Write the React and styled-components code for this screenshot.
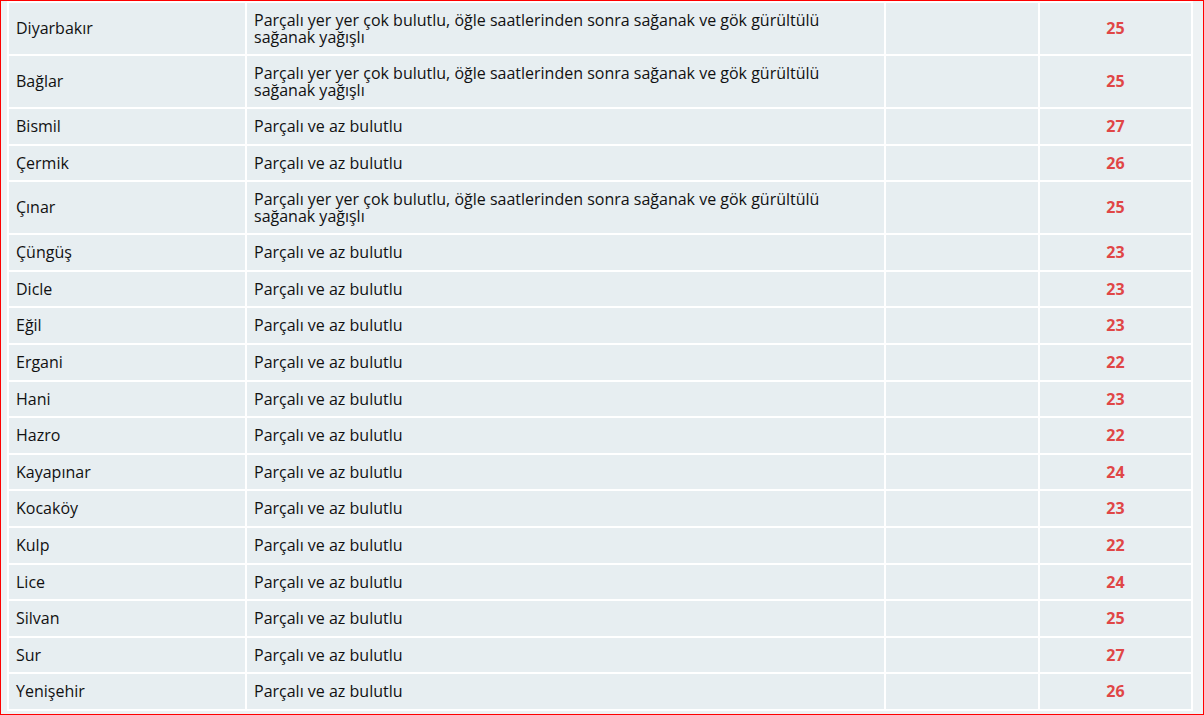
import React from "react";
import styled, { createGlobalStyle } from "styled-components";

const G = createGlobalStyle`
  html, body { margin: 0; padding: 0; }
  body { font-family: "Open Sans", sans-serif; }
`;
const Frame = styled.div`
  box-sizing: border-box;
  width: 1204px; height: 715px;
  border: 1px solid #ff0000;
  background: #eef2f4;
  padding: 0 10px 0 6px;
  overflow: hidden;
`;
const Table = styled.table`
  width: 1186px;
  border-collapse: collapse;
  background: #e7eef1;
  table-layout: fixed;
`;
const Td = styled.td`
  border: 2px solid #fff;
  padding: 0 7px;
  height: ${p => (p.$tall ? 51 : 34.6)}px;
  font-size: 16px;
  line-height: 16.5px;
  color: #111;
  vertical-align: middle;
  ${p => p.$num && `text-align:center;color:#e04646;font-weight:700;`}
`;
const long = "Parçalı yer yer çok bulutlu, öğle saatlerinden sonra sağanak ve gök gürültülü sağanak yağışlı";
const short = "Parçalı ve az bulutlu";
const rows = [
  ["Diyarbakır", long, 25], ["Bağlar", long, 25], ["Bismil", short, 27], ["Çermik", short, 26],
  ["Çınar", long, 25], ["Çüngüş", short, 23], ["Dicle", short, 23], ["Eğil", short, 23],
  ["Ergani", short, 22], ["Hani", short, 23], ["Hazro", short, 22], ["Kayapınar", short, 24],
  ["Kocaköy", short, 23], ["Kulp", short, 22], ["Lice", short, 24], ["Silvan", short, 25],
  ["Sur", short, 27], ["Yenişehir", short, 26],
];
const Long = styled.span`display:block;max-width:605px;`;
export default function App() {
  return (
    <Frame>
      <G />
      <Table>
        <colgroup><col style={{ width: 238 }} /><col style={{ width: 639 }} /><col style={{ width: 154 }} /><col /></colgroup>
        <tbody>
          {rows.map(([a, b, n]) => {
            const t = b === long;
            return (
              <tr key={a}>
                <Td $tall={t}>{a}</Td>
                <Td $tall={t}><Long>{b}</Long></Td>
                <Td $tall={t}></Td>
                <Td $tall={t} $num>{n}</Td>
              </tr>
            );
          })}
        </tbody>
      </Table>
    </Frame>
  );
}
